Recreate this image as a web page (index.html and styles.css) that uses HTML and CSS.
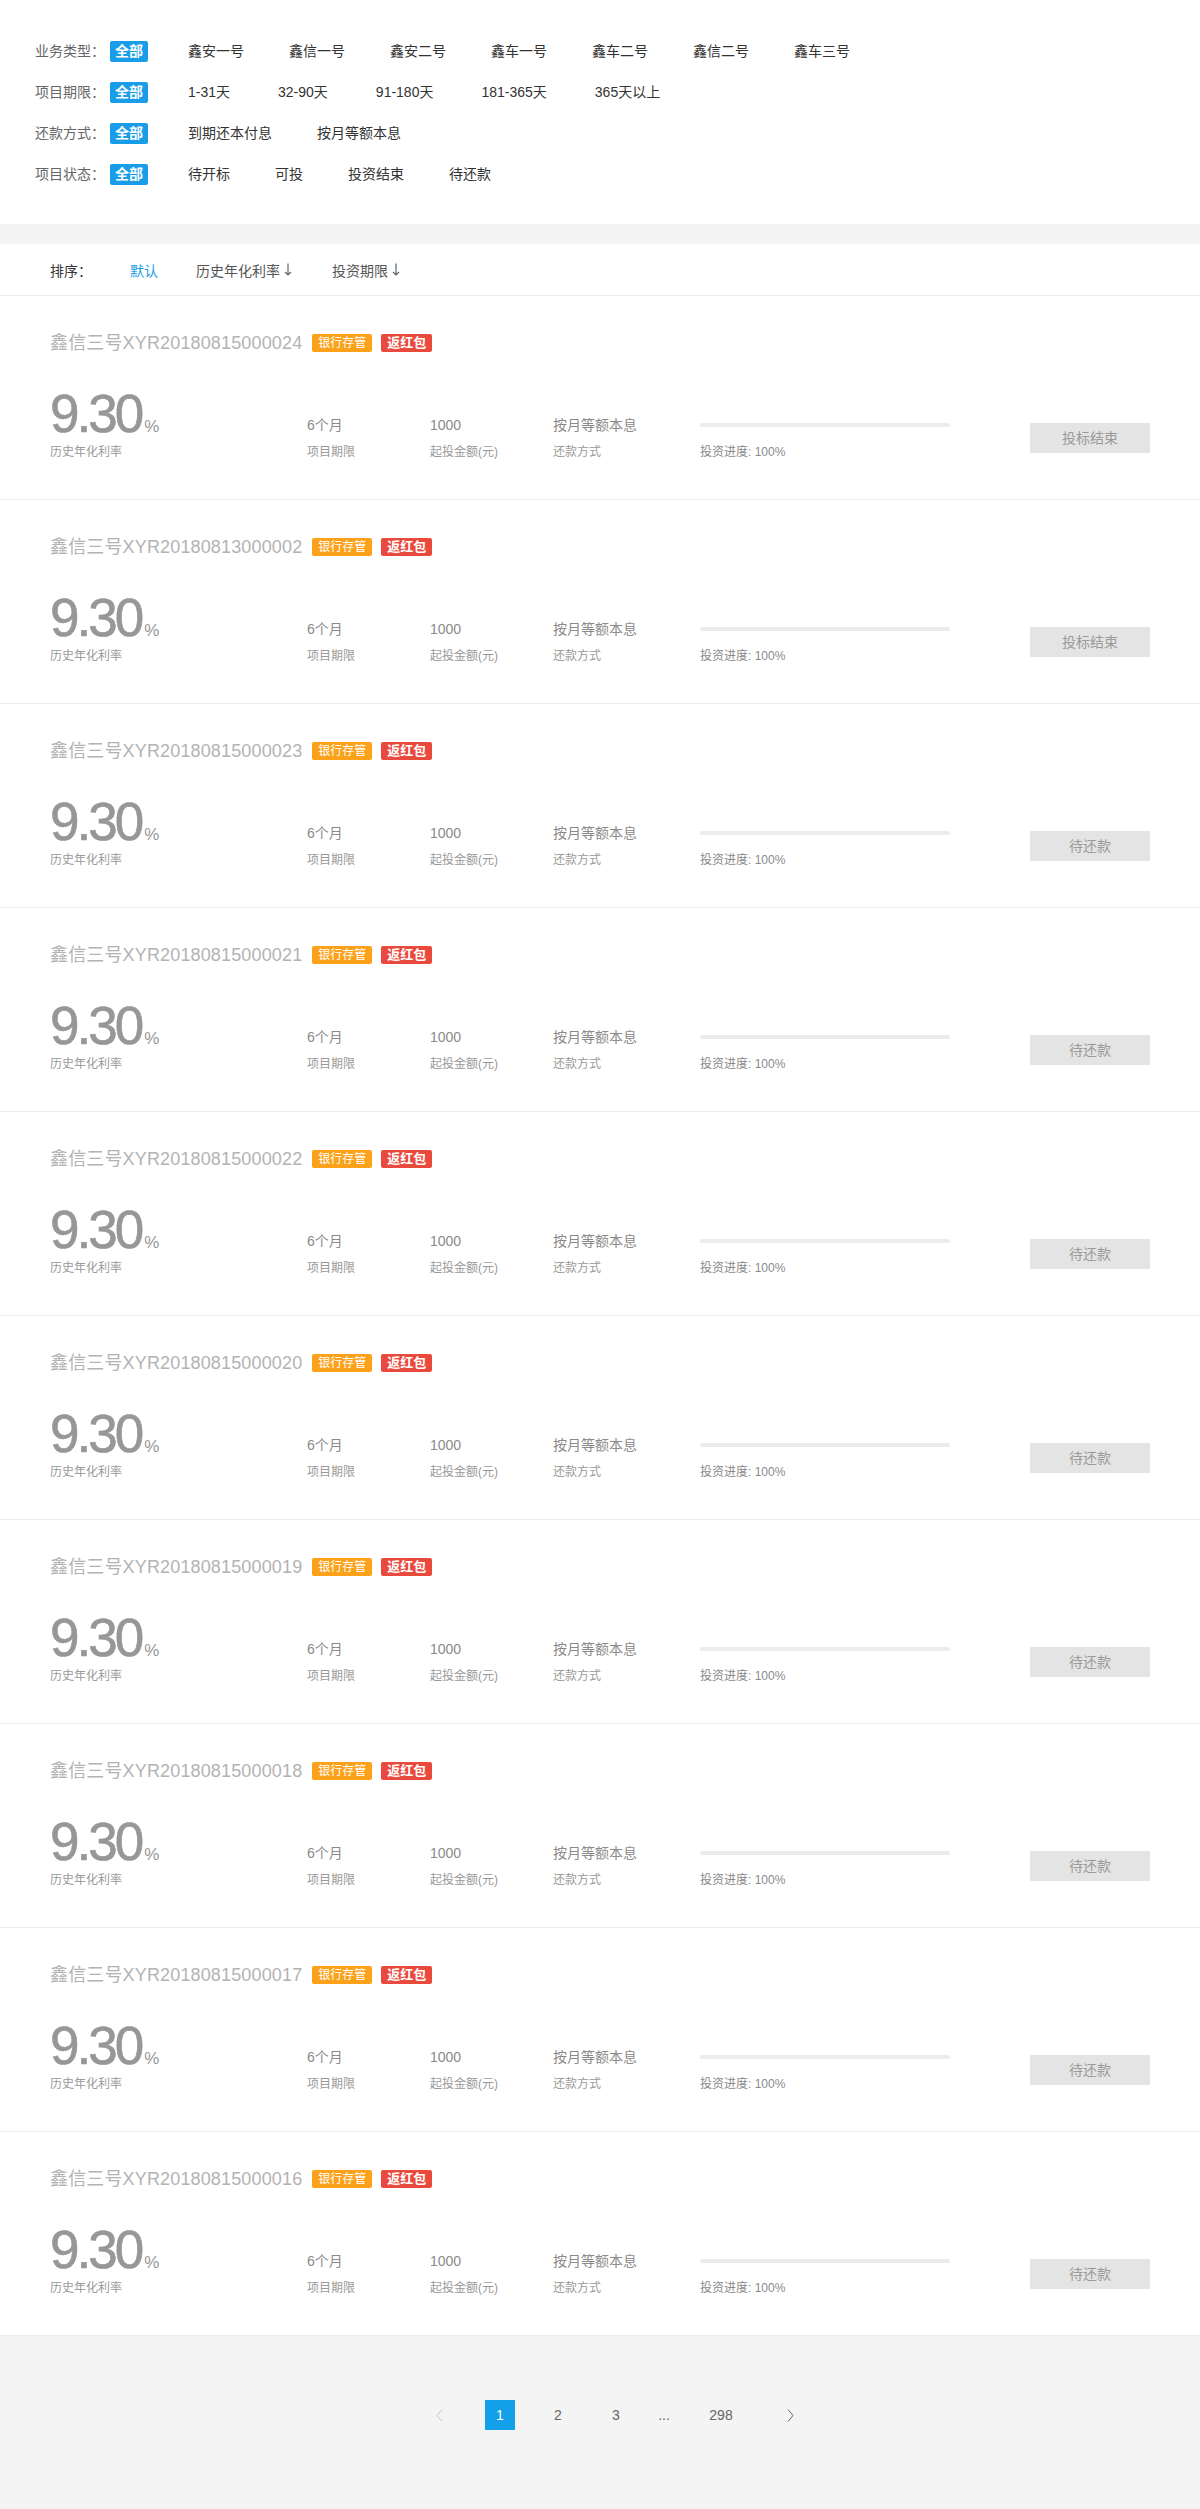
FILE: index.html
```html
<!DOCTYPE html>
<html lang="zh-CN">
<head>
<meta charset="utf-8">
<title>项目列表</title>
<link rel="stylesheet" href="styles.css">
</head>
<body>
<section class="filters">
  <div class="frow">
    <span class="flabel">业务类型：</span><span class="fall">全部</span>
    <span class="fitem">鑫安一号</span><span class="fitem">鑫信一号</span><span class="fitem">鑫安二号</span><span class="fitem">鑫车一号</span><span class="fitem">鑫车二号</span><span class="fitem">鑫信二号</span><span class="fitem">鑫车三号</span>
  </div>
  <div class="frow">
    <span class="flabel">项目期限：</span><span class="fall">全部</span>
    <span class="fitem num">1-31天</span><span class="fitem num">32-90天</span><span class="fitem num">91-180天</span><span class="fitem num">181-365天</span><span class="fitem num">365天以上</span>
  </div>
  <div class="frow">
    <span class="flabel">还款方式：</span><span class="fall">全部</span>
    <span class="fitem">到期还本付息</span><span class="fitem">按月等额本息</span>
  </div>
  <div class="frow">
    <span class="flabel">项目状态：</span><span class="fall">全部</span>
    <span class="fitem">待开标</span><span class="fitem">可投</span><span class="fitem">投资结束</span><span class="fitem">待还款</span>
  </div>
</section>
<div class="band"></div>
<nav class="sortbar">
  <span class="slabel">排序：</span>
  <span class="sitem active">默认</span>
  <span class="sitem">历史年化利率<svg class="sarrow" width="8" height="13" viewBox="0 0 8 13"><path d="M4 0.5V12M1 9l3 3 3-3" fill="none" stroke="#666" stroke-width="1.2"/></svg></span>
  <span class="sitem">投资期限<svg class="sarrow" width="8" height="13" viewBox="0 0 8 13"><path d="M4 0.5V12M1 9l3 3 3-3" fill="none" stroke="#666" stroke-width="1.2"/></svg></span>
</nav>
<main class="list" id="list">
</main>
<footer class="pager-wrap">
  <div class="pager">
    <span class="pg prev"><svg width="7" height="13" viewBox="0 0 7 13"><path d="M6 0.5L1 6.5l5 6" fill="none" stroke="#c8c8c8" stroke-width="1"/></svg></span>
    <span class="pg cur">1</span>
    <span class="pg">2</span>
    <span class="pg">3</span>
    <span class="pg dots">...</span>
    <span class="pg wide">298</span>
    <span class="pg next"><svg width="7" height="13" viewBox="0 0 7 13"><path d="M1 0.5l5 6-5 6" fill="none" stroke="#666" stroke-width="1"/></svg></span>
  </div>
</footer>
<template id="card-tpl">
  <article class="card">
    <h3 class="ctitle"><span class="cname"></span><span class="tag tag-bank">银行存管</span><span class="tag tag-red">返红包</span></h3>
    <div class="crow">
      <div class="rate"><div class="rnum">9.30<span class="pct">%</span></div><div class="lbl">历史年化利率</div></div>
      <div class="col c1"><div class="val">6个月</div><div class="lbl">项目期限</div></div>
      <div class="col c2"><div class="val">1000</div><div class="lbl">起投金额(元)</div></div>
      <div class="col c3"><div class="val">按月等额本息</div><div class="lbl">还款方式</div></div>
      <div class="prog"><div class="bar"></div><div class="lbl">投资进度: 100%</div></div>
      <span class="btn"></span>
    </div>
  </article>
</template>
<script>
  var items = [
    ["鑫信三号XYR20180815000024","投标结束"],
    ["鑫信三号XYR20180813000002","投标结束"],
    ["鑫信三号XYR20180815000023","待还款"],
    ["鑫信三号XYR20180815000021","待还款"],
    ["鑫信三号XYR20180815000022","待还款"],
    ["鑫信三号XYR20180815000020","待还款"],
    ["鑫信三号XYR20180815000019","待还款"],
    ["鑫信三号XYR20180815000018","待还款"],
    ["鑫信三号XYR20180815000017","待还款"],
    ["鑫信三号XYR20180815000016","待还款"]
  ];
  var list = document.getElementById('list');
  var tpl = document.getElementById('card-tpl');
  items.forEach(function (it) {
    var n = tpl.content.cloneNode(true);
    n.querySelector('.cname').textContent = it[0];
    n.querySelector('.btn').textContent = it[1];
    list.appendChild(n);
  });
</script>
</body>
</html>
```
FILE: styles.css
```css
* { box-sizing: border-box; margin: 0; padding: 0; }
body {
  margin: 0;
  background: #fff;
  font-family: "Liberation Sans", Arial, "Noto Sans CJK SC", sans-serif;
  font-size: 14px;
  color: #333;
}
.filters {
  background: #fff;
  padding: 41px 0 39px 35px;
  display: flex;
  flex-direction: column;
  gap: 20px;
}
.frow {
  display: flex;
  align-items: center;
  height: 21px;
  line-height: 21px;
}
.flabel {
  width: 75px;
  color: #666;
  font-size: 14px;
}
.fall {
  background: #1a9de8;
  color: #fff;
  font-weight: bold;
  padding: 0 5px;
  height: 21px;
  border-radius: 2px;
  margin-right: 40px;
}
.fitem {
  margin-right: 45px;
  color: #333;
}
.fitem.num { margin-right: 48px; }
.band {
  height: 20px;
  background: #f4f4f4;
}
.sortbar {
  height: 52px;
  display: flex;
  align-items: center;
  padding-left: 50px;
  border-bottom: 1px solid #ebebeb;
  font-size: 14px;
}
.slabel { width: 80px; color: #333; }
.sitem {
  display: flex;
  align-items: center;
  margin-right: 40px;
  color: #555;
}
.sitem.active { color: #1a9de8; margin-right: 38px; }
.sarrow { margin-left: 4px; }

.card {
  padding: 37px 50px 39px 50px;
  border-bottom: 1px solid #ebebeb;
}
.ctitle {
  display: flex;
  align-items: center;
  height: 20px;
  margin-bottom: 35px;
  font-weight: normal;
}
.cname {
  font-size: 18px;
  color: #b3b3b3;
  line-height: 20px;
  letter-spacing: 0.15px;
}
.tag {
  height: 18px;
  line-height: 18px;
  color: #fff;
  border-radius: 2px;
  padding: 0 6px;
}
.tag-bank {
  background: #fba11a;
  font-size: 12px;
  margin-left: 10px;
}
.tag-red {
  background: #ea4a3d;
  font-size: 13px;
  font-weight: bold;
  margin-left: 9px;
}
.crow {
  display: flex;
  align-items: flex-end;
}
.rate { width: 257px; }
.rnum {
  font-size: 53px;
  line-height: 52px;
  letter-spacing: -3px;
  color: #979797;
  height: 52px;
  -webkit-text-stroke: 0.6px #979797;
}
.pct {
  font-size: 17px;
  letter-spacing: 0;
  margin-left: 3px;
  -webkit-text-stroke: 0;
}
.lbl {
  font-size: 12px;
  line-height: 16px;
  color: #999;
}
.rate .lbl { margin-top: 4px; }
.col .lbl { margin-top: 9px; }
.val {
  font-size: 14px;
  line-height: 20px;
  color: #8a8a8a;
}
.c1 { width: 123px; }
.c2 { width: 123px; }
.c3 { width: 147px; }
.prog { width: 250px; }
.bar {
  height: 4px;
  border-radius: 2px;
  background: #ececec;
  margin-bottom: 17px;
}
.prog .lbl { color: #8a8a8a; }
.btn {
  margin-left: 80px;
  width: 120px;
  height: 30px;
  line-height: 30px;
  text-align: center;
  background: #e4e4e4;
  color: #9a9a9a;
  font-size: 14px;
  margin-bottom: 7px;
}
.pager-wrap {
  background: #f4f4f4;
  padding: 64px 0 79px 424px;
}
.pager {
  display: flex;
  align-items: center;
  height: 30px;
  gap: 28px;
}
.pg {
  width: 30px;
  height: 30px;
  line-height: 30px;
  text-align: center;
  color: #666;
  font-size: 14px;
  display: flex;
  align-items: center;
  justify-content: center;
}
.pg.prev { margin-right: 3px; }
.pg.cur {
  background: #12a0e8;
  color: #fff;
}
.pg.dots { width: 10px; }
.pg.wide { width: 48px; }
.pg.next { width: 34px; }
```
